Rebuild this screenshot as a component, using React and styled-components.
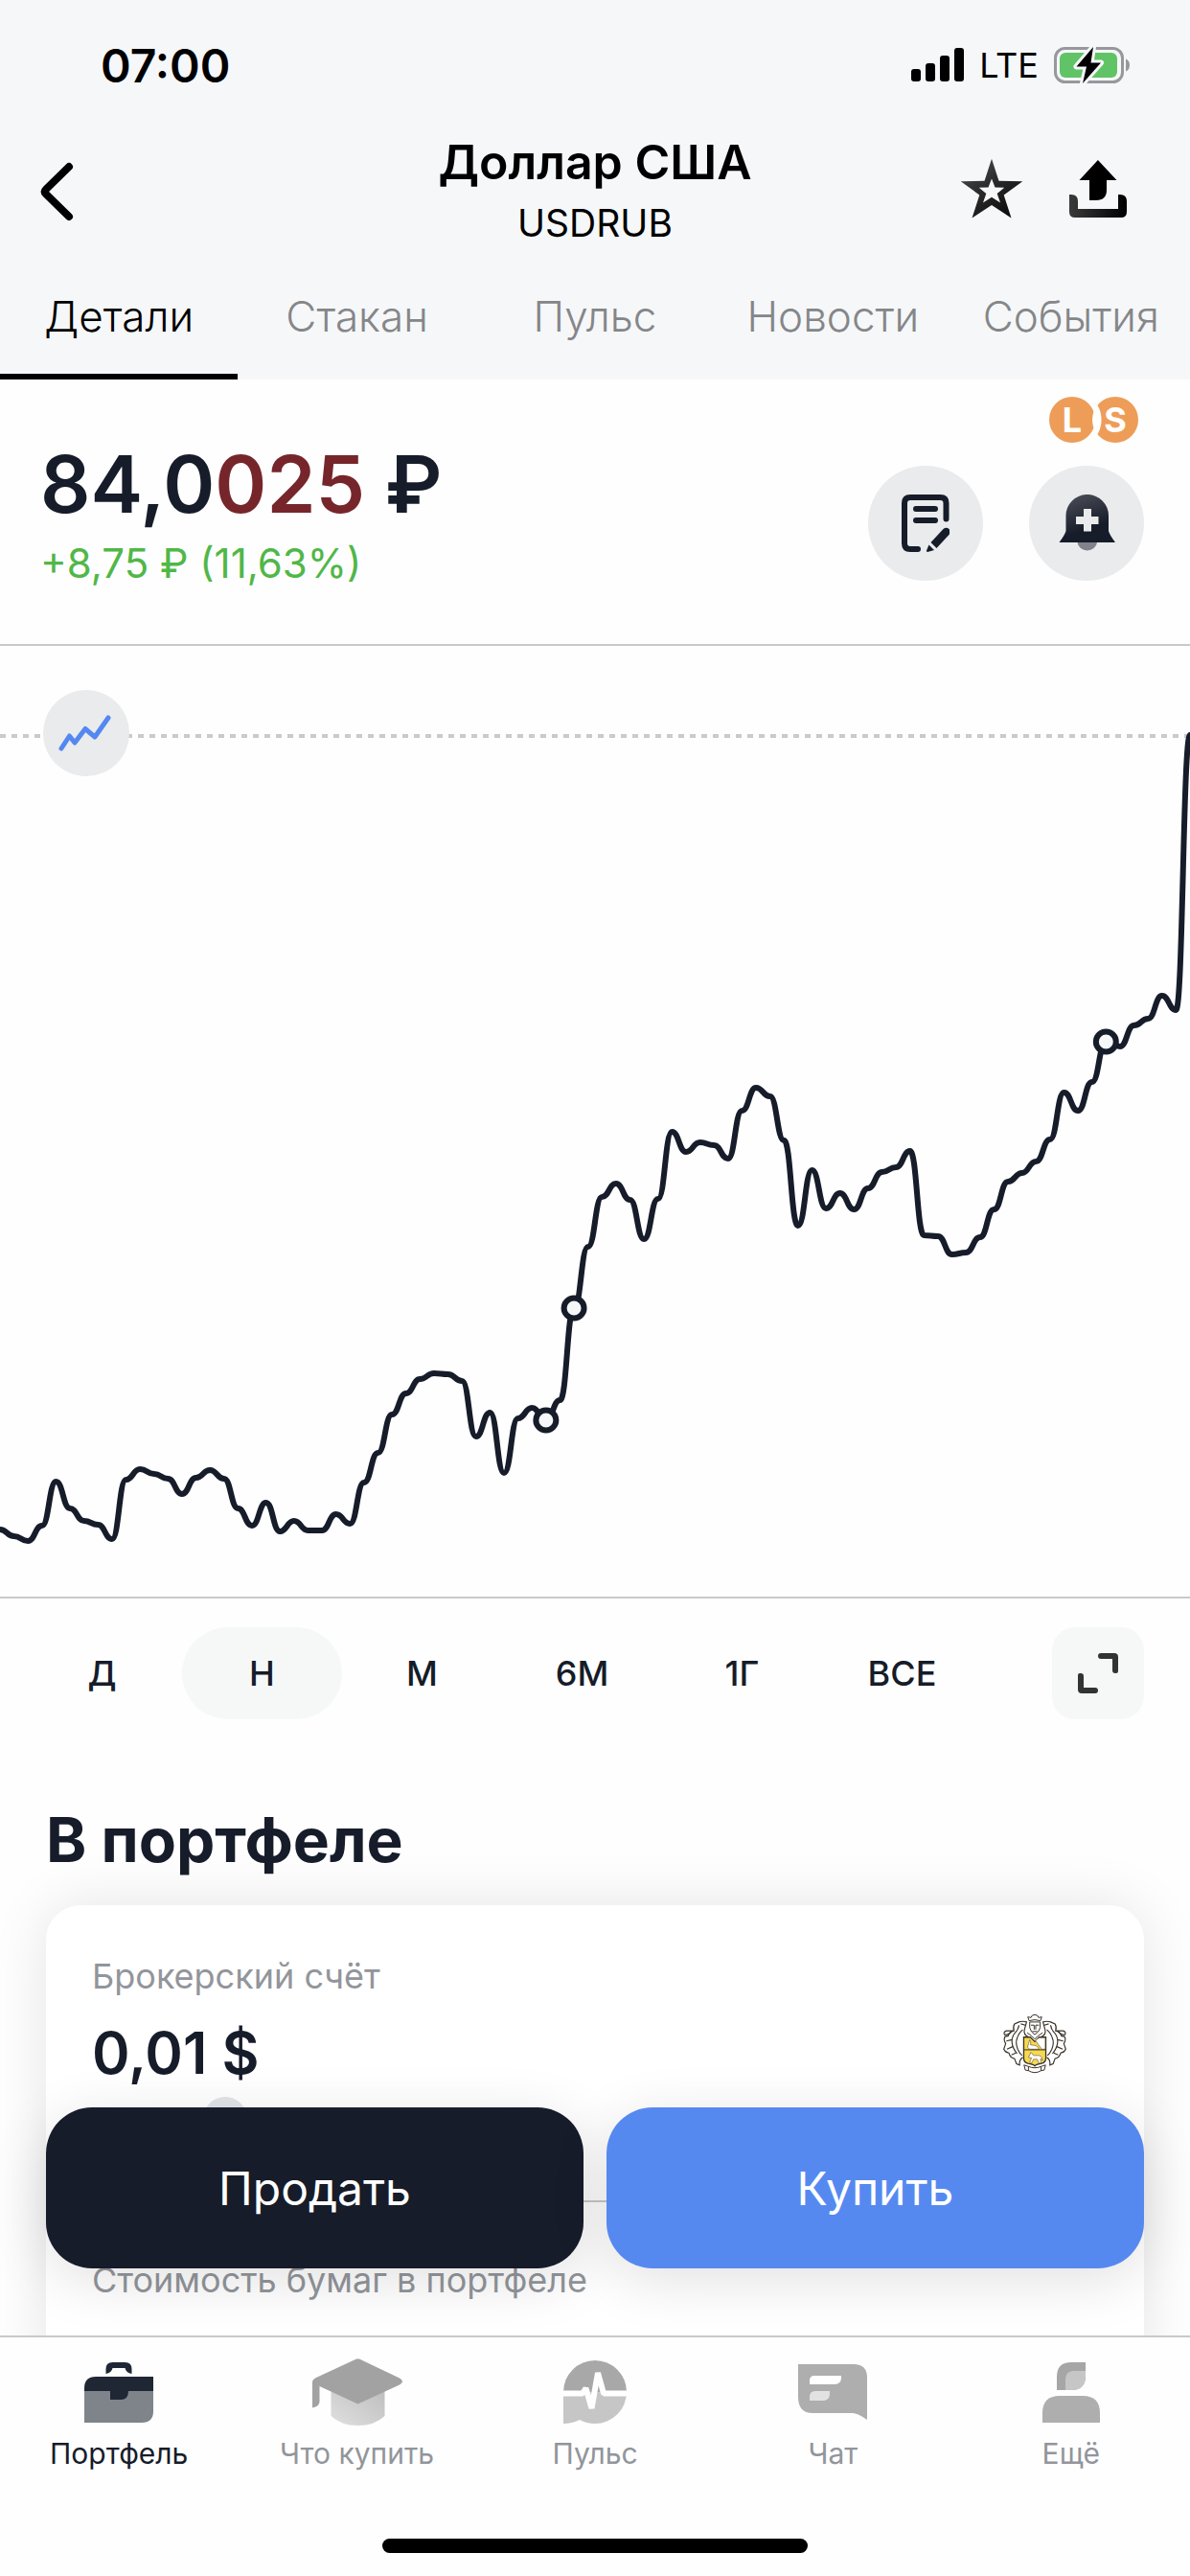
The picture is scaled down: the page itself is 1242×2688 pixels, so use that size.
import React, { useState } from "react";
import styled, { createGlobalStyle } from "styled-components";

const tabs = ["Детали", "Стакан", "Пульс", "Новости", "События"];
const periods = ["Д", "Н", "М", "6М", "1Г", "ВСЕ"];

const STEP = 1242 / 85;
const prices = [
  1596, 1603, 1608, 1592, 1546, 1574, 1587, 1591, 1606, 1544, 1533, 1538, 1543,
  1559, 1542, 1534, 1543, 1574, 1592, 1568, 1598, 1587, 1597, 1597, 1580, 1590,
  1547, 1516, 1476, 1454, 1439, 1433, 1434, 1441, 1499, 1474, 1537, 1480, 1469,
  1482, 1461, 1365, 1301, 1249, 1235, 1252, 1293, 1251, 1181, 1202, 1192, 1195,
  1209, 1159, 1135, 1144, 1190, 1279, 1221, 1261, 1245, 1262, 1240, 1223, 1218,
  1201, 1289, 1290, 1309, 1307, 1291, 1262, 1233, 1224, 1212, 1189, 1140, 1159,
  1129, 1087, 1092, 1070, 1063, 1039, 1054, 767,
];
const marks = [39, 41, 79];

const linePath = prices
  .map((y, i) => {
    if (i === 0) return `M0 ${y}`;
    const mid = (i - 0.5) * STEP;
    return `C${mid} ${prices[i - 1]} ${mid} ${y} ${i * STEP} ${y}`;
  })
  .join(" ");

function PriceChart() {
  return (
    <ChartSvg viewBox="0 674 1242 992" role="img" aria-label="График USDRUB">
      <line
        x1="0"
        x2="1242"
        y1="768"
        y2="768"
        stroke="#c9cacc"
        strokeWidth="4"
        strokeDasharray="6 6"
      />
      <path
        d={linePath}
        fill="none"
        stroke="#161c29"
        strokeWidth="6"
        strokeLinejoin="round"
        strokeLinecap="round"
      />
      {marks.map((i) => (
        <circle
          key={i}
          cx={i * STEP}
          cy={prices[i]}
          r="10.5"
          fill="#f6f7f8"
          stroke="#161c29"
          strokeWidth="6"
        />
      ))}
    </ChartSvg>
  );
}

const SignalIcon = () => (
  <svg width="55" height="36" viewBox="0 0 55 36" aria-hidden="true">
    <rect x="0" y="22" width="10" height="13" rx="3" />
    <rect x="15" y="16" width="10" height="19" rx="3" />
    <rect x="30" y="8" width="10" height="27" rx="3" />
    <rect x="45" y="0" width="10" height="35" rx="3" />
  </svg>
);

const BatteryIcon = () => (
  <svg width="80" height="40" viewBox="0 0 80 40" aria-hidden="true">
    <rect
      x="1.5"
      y="2.5"
      width="70"
      height="35"
      rx="10"
      fill="none"
      stroke="#97989c"
      strokeWidth="3"
    />
    <rect x="6" y="7" width="60" height="26" rx="6" fill="#60c466" />
    <path d="M75 13.5Q79 15 79 20Q79 25 75 26.5Z" fill="#97989c" />
    <path
      d="M41 1L23.5 21.5H34L30 39L49 17.5H38.5Z"
      fill="#000"
      stroke="#f6f7f9"
      strokeWidth="6"
      strokeLinejoin="round"
      paintOrder="stroke"
    />
  </svg>
);

const BackIcon = () => (
  <svg width="36" height="62" viewBox="0 0 36 62" aria-hidden="true">
    <path
      d="M31 5L7 28.5Q4.5 31 7 33.5L31 57"
      fill="none"
      stroke="#000"
      strokeWidth="8"
      strokeLinecap="round"
    />
  </svg>
);

const StarIcon = () => (
  <svg width="66" height="64" viewBox="0 0 66 64" aria-hidden="true">
    <defs>
      <linearGradient id="star" x1="0" y1="0" x2="0.8" y2="1">
        <stop offset="0" stopColor="#555" />
        <stop offset="0.5" stopColor="#2a2a2a" />
        <stop offset="1" stopColor="#0a0a0a" />
      </linearGradient>
    </defs>
    <path
      fill="url(#star)"
      fillRule="evenodd"
      d="M33 .7L40.5 23.7L65.3 24.2L45.7 38.5L53.5 62.5L33 49L12.5 62.5L20.3 38.5L.7 24.2L25.5 23.7ZM33 21.5L29.5 30.5L19.7 30.8L27.3 37L24 46.5L33 40.7L42 46.5L38.7 37L46.3 30.8L36.5 30.5Z"
    />
  </svg>
);

const ShareIcon = () => (
  <svg width="60" height="60" viewBox="0 0 60 60" aria-hidden="true">
    <defs>
      <linearGradient id="tray" x1="0" y1="0" x2="1" y2="0">
        <stop offset="0" stopColor="#3a3a3a" />
        <stop offset="1" stopColor="#000" />
      </linearGradient>
    </defs>
    <path d="M29.9 0L49.5 21H39V31Q39 42 28 42H21V21H10.5Z" />
    <path
      fill="url(#tray)"
      d="M0 36H2Q9 36 9 43V51H51V36H53Q60 36 60 43V54Q60 60 54 60H6Q0 60 0 54Z"
    />
  </svg>
);

const OrderIcon = () => (
  <svg width="50" height="60" viewBox="0 0 50 60" aria-hidden="true">
    <g fill="none" stroke="#161c29" strokeWidth="6" strokeLinecap="round">
      <path d="M46.5 25.5V9Q46.5 3 40.5 3H9Q3 3 3 9V51Q3 57 9 57H17" />
      <path d="M15 15H35M15 27H35" />
    </g>
    <path
      fill="#161c29"
      d="M43.5 36Q46.5 33.5 49.5 36Q52 39 49.5 42L36.5 56L30.5 50ZM28.5 52.5L34 58L27 60Q26 60 26 58.5Z"
    />
  </svg>
);

const BellIcon = () => (
  <svg width="59" height="60" viewBox="0 0 59 60" aria-hidden="true">
    <defs>
      <linearGradient id="bell" x1="0.3" y1="0" x2="0.7" y2="1">
        <stop offset="0" stopColor="#484c55" />
        <stop offset="0.7" stopColor="#161c29" />
      </linearGradient>
    </defs>
    <path d="M19.5 50A10.3 9.5 0 0 0 40 50Z" fill="#80838b" />
    <path
      fill="url(#bell)"
      d="M7.5 22A22.2 22 0 0 1 52 22V38Q53 42 59 50H.5Q6.5 42 7.5 38Z"
    />
    <path fill="#e9ebec" d="M26 15H34V23H41.5V31H34V38.5H26V31H18V23H26Z" />
  </svg>
);

const TrendIcon = () => (
  <svg width="58" height="40" viewBox="0 0 58 40" aria-hidden="true">
    <path
      d="M3 36L11.500 23L17 30L28 15.500L38 24L52 4"
      fill="none"
      stroke="#5488f0"
      strokeWidth="5"
      strokeLinecap="round"
      strokeLinejoin="round"
    />
  </svg>
);

const ExpandIcon = () => (
  <svg width="42" height="42" viewBox="0 0 42 42" aria-hidden="true">
    <path
      fill="#333"
      d="M24 0H38Q42 0 42 4V19Q42 21 40 21H39Q36 21 36 18V6H24Q21 6 21 3Q21 0 24 0ZM2 21H3Q6 21 6 24V36H18Q21 36 21 39Q21 42 18 42H4Q0 42 0 38V23Q0 21 2 21Z"
    />
  </svg>
);

// half of the mantling, mirrored for the other side
const Mantling = () => (
  <g fill="none" stroke="#3a3228" strokeWidth="3.5">
    <path d="M281 198Q262 190 268 172L274 150Q262 146 250 150L236 156Q230 166 234 178Q220 180 216 194L206 196Q200 206 208 218L202 236Q206 246 218 248Q222 264 236 266L242 282L252 286Q250 270 262 262" />
    <path d="M262 174Q248 186 244 202Q238 216 246 236Q252 250 260 256" />
    <path d="M250 160Q248 174 236 186Q226 200 228 216Q230 234 244 250" />
    <path d="M270 160L256 156M228 206L210 210M230 228L212 236M240 248L226 254" />
    <path d="M204 190Q200 182 210 178L228 178Q222 188 212 190Z" />
  </g>
);

const CrestIcon = () => (
  <svg width="68" height="62" viewBox="197 126 206 188" aria-hidden="true">
    <Mantling />
    <g transform="matrix(-1 0 0 1 600 0)">
      <Mantling />
    </g>
    <path
      d="M282 146L278 134L288 136L292 129L300 127L308 129L312 136L322 134L318 146Q300 140 282 146Z"
      fill="#fff"
      stroke="#3a3228"
      strokeWidth="3"
    />
    <path
      d="M284 150H317V168Q314 182 300 190Q287 182 284 168Z"
      fill="#fff"
      stroke="#3a3228"
      strokeWidth="3"
    />
    <path
      d="M288 160H298V174M313 160H303V174M276 184L290 194L300 204L310 194L325 184M292 180H308"
      fill="none"
      stroke="#3a3228"
      strokeWidth="3"
    />
    <path
      d="M265 198H286L300 212L314 198H335V264Q335 278 322 281Q306 283 300 289Q294 283 278 281Q265 278 265 264Z"
      fill="#f5d94e"
      stroke="#3a3228"
      strokeWidth="4"
    />
    <path
      d="M302 208L314 200H333V236H322Q312 222 302 208ZM277 230Q280 218 284 206Q290 214 286 222L298 224Q308 222 314 236H284Z"
      fill="#fff"
      stroke="#6b5a35"
      strokeWidth="2"
    />
    <path d="M265 238H335" stroke="#3a3228" strokeWidth="3" />
    <path
      d="M280 262L288 246L296 256H314Q324 258 325 272L318 266L320 280H313L308 268H296L290 280L284 276L290 264Z"
      fill="#fff"
      stroke="#6b5a35"
      strokeWidth="2"
    />
    <path
      d="M266 286L278 290Q300 300 322 290L334 286L330 302L320 304Q300 316 280 304L270 302ZM280 291V304M320 291V304"
      fill="#fff"
      stroke="#3a3228"
      strokeWidth="3"
    />
  </svg>
);

const CaseIcon = () => (
  <svg width="72" height="63" viewBox="0 0 72 63" aria-hidden="true">
    <path
      fill="#1f2734"
      d="M22.5 12V7Q22.5 0 29.5 0H42.5Q49.5 0 49.5 7V12Q43.5 11 42.5 6H29.5Q28.5 11 22.5 12ZM0 30V27Q0 15 12 15H72V30Z"
    />
    <path fill="#7f848b" d="M0 30H72V51Q72 63 60 63H0Z" />
    <path fill="#1f2734" d="M27 30H46Q46 39 38 39H27Z" />
  </svg>
);

const CapIcon = () => (
  <svg width="94" height="70" viewBox="0 0 94 70" aria-hidden="true">
    <defs>
      <linearGradient id="cap" x1="0" y1="1" x2="1" y2="0">
        <stop offset="0" stopColor="#e0e0e0" />
        <stop offset="1" stopColor="#bdbdbd" />
      </linearGradient>
    </defs>
    <path fill="url(#cap)" d="M19.5 30V60Q30 70 47.5 70Q65 70 75.5 60V30Z" />
    <path
      fill="#a2a2a2"
      d="M45.5 .7Q47.5 0 49.5 .7L91 20.5Q97 24 91 27.5L47.5 47.5L7.5 29V45Q7.5 50 0 51.5V25Q0 22 4 20Z"
    />
  </svg>
);

const PulseIcon = () => (
  <svg width="66" height="66" viewBox="0 0 66 66" aria-hidden="true">
    <path fill="#a8a8a8" d="M0 33A33 33 0 0 1 66 33Z" />
    <path
      fill="#c6c6c6"
      d="M0 33H66A33 33 0 0 1 33 66Q24 66 17 62Q9 66 0 66Z"
    />
    <path
      d="M0 34.5H20L23.5 29L29.5 50L36 13L42 34.5H66"
      fill="none"
      stroke="#fff"
      strokeWidth="6"
      strokeLinejoin="bevel"
    />
  </svg>
);

const ChatIcon = () => (
  <svg width="72" height="58" viewBox="0 0 72 58" aria-hidden="true">
    <path
      fill="#aeaeae"
      d="M0 0H58Q72 0 72 14V58Q62 51 57 51H15Q0 51 0 34Z"
    />
    <path fill="#fff" d="M12 21V17Q12 12 17 12H45V14Q45 21 38 21Z" />
    <path fill="#e2e2e2" d="M12 38V34Q12 28 18 28H33V31Q33 38 26 38Z" />
  </svg>
);

const MoreIcon = () => (
  <svg width="60" height="63" viewBox="0 0 60 63" aria-hidden="true">
    <path fill="#a6a6a6" d="M15 29V15Q15 0 30 0H45V14Q45 29 30 29Z" />
    <path fill="#c6c6c6" d="M24 29V18Q24 9 33 9H45V14Q45 29 31 29Z" />
    <path fill="#aeaeae" d="M0 63V53Q0 35 18 35H42Q60 35 60 53V63Z" />
  </svg>
);

const navItems = [
  { label: "Портфель", Icon: CaseIcon, active: true },
  { label: "Что купить", Icon: CapIcon },
  { label: "Пульс", Icon: PulseIcon },
  { label: "Чат", Icon: ChatIcon },
  { label: "Ещё", Icon: MoreIcon },
];

function App() {
  const [tab, setTab] = useState("Детали");
  const [period, setPeriod] = useState("Н");

  return (
    <Screen>
      <GlobalStyle />
      <Top>
        <StatusBar>
          <Time>07:00</Time>
          <StatusIcons>
            <SignalIcon />
            <Network>LTE</Network>
            <BatteryIcon />
          </StatusIcons>
        </StatusBar>
        <TitleRow>
          <IconButton aria-label="Назад">
            <BackIcon />
          </IconButton>
          <Titles>
            <Title>Доллар США</Title>
            <Ticker>USDRUB</Ticker>
          </Titles>
          <HeaderActions>
            <IconButton aria-label="В избранное">
              <StarIcon />
            </IconButton>
            <IconButton aria-label="Поделиться">
              <ShareIcon />
            </IconButton>
          </HeaderActions>
        </TitleRow>
        <Tabs>
          {tabs.map((name) => (
            <Tab
              key={name}
              $active={name === tab}
              onClick={() => setTab(name)}
            >
              {name}
            </Tab>
          ))}
        </Tabs>
      </Top>

      <Content>
        <Quote>
          <div>
            <Price>
              84,0<em>025</em> ₽
            </Price>
            <Change>+8,75 ₽ (11,63%)</Change>
          </div>
          <QuoteSide>
            <Badges>
              <Badge>L</Badge>
              <Badge $cut>S</Badge>
            </Badges>
            <RoundButtons>
              <RoundButton $size={120} aria-label="Заявка">
                <OrderIcon />
              </RoundButton>
              <RoundButton $size={120} aria-label="Уведомление о цене">
                <BellIcon />
              </RoundButton>
            </RoundButtons>
          </QuoteSide>
        </Quote>

        <ChartBox>
          <PriceChart />
          <ChartMode>
            <RoundButton $size={90} aria-label="Вид графика">
              <TrendIcon />
            </RoundButton>
          </ChartMode>
        </ChartBox>

        <PeriodRow>
          <Periods>
            {periods.map((name) => (
              <Period
                key={name}
                $active={name === period}
                onClick={() => setPeriod(name)}
              >
                {name}
              </Period>
            ))}
          </Periods>
          <ExpandButton aria-label="Развернуть">
            <ExpandIcon />
          </ExpandButton>
        </PeriodRow>

        <Heading>В портфеле</Heading>
        <Card>
          <Label>Брокерский счёт</Label>
          <ValueRow>
            <Value>0,01 $</Value>
            <CrestIcon />
          </ValueRow>
          <InfoDot aria-label="Подробнее" />
          <Divider />
          <Label>Стоимость бумаг в портфеле</Label>
        </Card>
      </Content>

      <Bottom>
        <Deals>
          <Deal $color="#161c29">Продать</Deal>
          <Deal $color="#5689f0">Купить</Deal>
        </Deals>
        <Nav>
          {navItems.map(({ label, Icon, active }) => (
            <NavLink key={label} href="#" $active={active}>
              <NavIcon>
                <Icon />
              </NavIcon>
              {label}
            </NavLink>
          ))}
        </Nav>
        <HomeBar />
      </Bottom>
    </Screen>
  );
}

export default App;

const GlobalStyle = createGlobalStyle`
  * {
    box-sizing: border-box;
  }

  body {
    margin: 0;
    background: #fefefe;
    color: #161c29;
    font-family: Inter, "Liberation Sans", sans-serif;
  }

  svg {
    display: block;
    flex-shrink: 0;
  }
`;

const Button = styled.button`
  padding: 0;
  border: 0;
  background: none;
  color: inherit;
  font: inherit;
  cursor: pointer;
`;

const Screen = styled.div`
  display: flex;
  flex-direction: column;
  height: 100vh;
  overflow: hidden;
`;

const Top = styled.header`
  flex-shrink: 0;
  background: #f6f7f9;
  color: #000;
`;

const StatusBar = styled.div`
  display: flex;
  align-items: center;
  justify-content: space-between;
  height: 136px;
  padding: 0 62px 0 105px;
`;

const Time = styled.span`
  font-size: 48px;
  font-weight: 600;
`;

const StatusIcons = styled.div`
  display: flex;
  align-items: center;
  gap: 16px;
`;

const Network = styled.span`
  font-size: 36px;
`;

const TitleRow = styled.div`
  display: grid;
  grid-template-columns: 1fr auto 1fr;
  align-items: center;
  padding: 0 41px;
`;

const IconButton = styled(Button)`
  display: flex;
`;

const Titles = styled.div`
  text-align: center;
`;

const Title = styled.h1`
  margin: 0;
  font-size: 50px;
  font-weight: 600;
  line-height: 66px;
`;

const Ticker = styled.div`
  font-size: 39px;
  line-height: 62px;
`;

const HeaderActions = styled.div`
  display: flex;
  align-items: center;
  justify-content: flex-end;
  gap: 48px;
  padding: 0 25px 6px 0;
`;

const Tabs = styled.nav`
  display: grid;
  grid-template-columns: repeat(5, 1fr);
`;

const Tab = styled(Button)`
  height: 132px;
  border-top: 6px solid transparent;
  border-bottom: 6px solid ${({ $active }) => ($active ? "#000" : "transparent")};
  color: ${({ $active }) => ($active ? "#000" : "#858688")};
  font-size: 44px;
  font-weight: 300;
`;

const Content = styled.main`
  flex: 1;
  min-height: 0;
  overflow: hidden;
`;

const Quote = styled.section`
  display: flex;
  justify-content: space-between;
  min-height: 278px;
  padding: 0 48px 0 42px;
  border-bottom: 2px solid #c8c9cb;
`;

const Price = styled.div`
  padding-top: 58px;
  font-size: 82px;
  font-weight: 600;
  line-height: 104px;

  em {
    color: #76262b;
    font-style: normal;
  }
`;

const Change = styled.div`
  color: #50b748;
  font-size: 42px;
  line-height: 60px;
`;

const QuoteSide = styled.div`
  display: flex;
  flex-direction: column;
  align-items: flex-end;
  gap: 24px;
  padding-top: 18px;
`;

const Badges = styled.div`
  display: flex;
  padding-right: 6px;
`;

const Badge = styled.span`
  width: 48px;
  height: 48px;
  border-radius: 50%;
  background: #ee9d58;
  color: #fff;
  font-size: 36px;
  font-weight: 700;
  line-height: 48px;
  text-align: center;
  ${({ $cut }) =>
    $cut &&
    `
    margin-left: -3px;
    background: radial-gradient(circle at -21px 24px, #fefefe 30px, #ee9d58 31px);
  `}
`;

const RoundButtons = styled.div`
  display: flex;
  gap: 48px;
`;

const RoundButton = styled(Button)`
  display: flex;
  align-items: center;
  justify-content: center;
  width: ${({ $size }) => $size}px;
  height: ${({ $size }) => $size}px;
  border-radius: 50%;
  background: #e9ebec;
`;

const ChartBox = styled.section`
  position: relative;
  border-bottom: 2px solid #c8c9cb;
`;

const ChartSvg = styled.svg`
  width: 100%;
  height: auto;
`;

const ChartMode = styled.div`
  position: absolute;
  top: 46px;
  left: 45px;
`;

const PeriodRow = styled.div`
  display: flex;
  gap: 73px;
  padding: 30px 48px 0 23px;
`;

const Periods = styled.div`
  display: flex;
  flex: 1;
`;

const Period = styled(Button)`
  flex: 1;
  height: 96px;
  border-radius: 48px;
  background: ${({ $active }) => ($active ? "#f6f8f8" : "none")};
  font-size: 36px;
  font-weight: 500;
`;

const ExpandButton = styled(Button)`
  display: flex;
  align-items: center;
  justify-content: center;
  width: 96px;
  height: 96px;
  border-radius: 24px;
  background: #f6f8f8;
`;

const Heading = styled.h2`
  margin: 86px 48px 28px;
  font-size: 64px;
  font-weight: 700;
  line-height: 80px;
`;

const Card = styled.section`
  height: 600px;
  margin: 0 48px;
  padding: 50px 80px 0 48px;
  border-radius: 36px;
  background: #fff;
  box-shadow: 0 0 60px rgba(0, 0, 0, 0.1);
`;

const Label = styled.div`
  color: #92959b;
  font-size: 36px;
  line-height: 48px;
`;

const ValueRow = styled.div`
  display: flex;
  align-items: flex-start;
  justify-content: space-between;
  padding-top: 16px;
`;

const Value = styled.strong`
  font-size: 60px;
  font-weight: 600;
  line-height: 80px;
`;

const InfoDot = styled(Button)`
  display: block;
  width: 46px;
  height: 46px;
  margin: 6px 0 0 116px;
  border-radius: 50%;
  background: #e2e5e8;
`;

const Divider = styled.hr`
  height: 2px;
  margin: 62px -32px 57px 0;
  border: 0;
  background: #c8c9cb;
`;

const Bottom = styled.footer`
  position: relative;
  flex-shrink: 0;
  border-top: 2px solid #c8c9cb;
  background: #fefefe;
`;

const Deals = styled.div`
  position: absolute;
  right: 48px;
  bottom: calc(100% + 72px);
  left: 48px;
  display: flex;
  gap: 24px;
`;

const Deal = styled(Button)`
  flex: 1;
  height: 168px;
  border-radius: 48px;
  background: ${({ $color }) => $color};
  box-shadow: 0 12px 60px rgba(0, 0, 0, 0.12);
  color: #fff;
  font-size: 48px;
`;

const Nav = styled.nav`
  position: relative;
  display: grid;
  grid-template-columns: repeat(5, 1fr);
  padding-top: 21px;
  background: #fefefe;
`;

const NavLink = styled.a`
  display: flex;
  flex-direction: column;
  align-items: center;
  gap: 8px;
  color: ${({ $active }) => ($active ? "#161c29" : "#92959b")};
  font-size: 30px;
  line-height: 40px;
  text-decoration: none;
`;

const NavIcon = styled.span`
  display: flex;
  align-items: center;
  height: 72px;
`;

const HomeBar = styled.div`
  width: 444px;
  height: 15px;
  margin: 69px auto 24px;
  border-radius: 8px;
  background: #000;
`;
